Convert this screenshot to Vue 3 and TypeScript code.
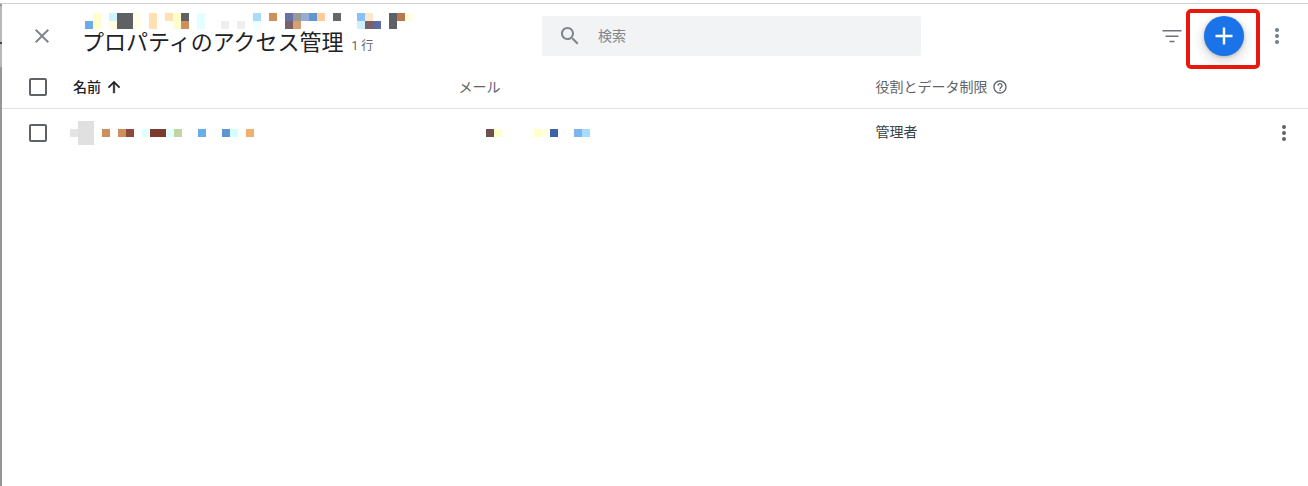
<script setup lang="ts">
type Cell = [col: number, row: number, color: string, span?: number, rows?: number]

const titleCells: Cell[] = [
  [0, 2, '#6daae8'], [1, 1, '#ffffcc', 1, 2], [3, 1, '#ccf5ff'], [3, 2, '#ffffe0'], [4, 1, '#5f6064', 2, 2],
  [6, 1, '#ffffe8', 1, 2], [8, 1, '#ffe0b0', 1, 2], [10, 1, '#ffe0b0'], [11, 1, '#ffffcc', 1, 2],
  [12, 1, '#5f6064'], [12, 2, '#cd8f5c'], [14, 1, '#e0ffff', 1, 2], [17, 2, '#eeeeee'], [19, 2, '#eeeeee'],
  [21, 1, '#a8dcff'], [21, 2, '#f0ffff'], [23, 1, '#cd8f5c'], [25, 1, '#6870a8'], [25, 2, '#7a6068'],
  [26, 1, '#999999'], [26, 2, '#d8a070'], [27, 1, '#94acd4'], [28, 1, '#6095d4'], [29, 1, '#ffcc99'],
  [31, 1, '#666666'], [34, 1, '#88c0f8'], [34, 2, '#ccf0ff'], [35, 1, '#ffe8c8'], [35, 2, '#7a6068'],
  [36, 2, '#5c6aa0'], [38, 1, '#5f6064', 1, 2], [39, 1, '#b87850'], [40, 1, '#ffffe0'],
]
const nameCells: Cell[] = [
  [0, 2, '#e4e4e4'], [1, 1, '#e0e0e0', 2, 3], [4, 2, '#cd8f5c'], [6, 2, '#cd8f5c'], [7, 2, '#8a4a3c'],
  [9, 2, '#e0ffff'], [10, 2, '#7c3a2c', 2], [12, 2, '#e0ffff'], [13, 2, '#c0d4a4'], [16, 2, '#6aacec'],
  [19, 2, '#6095d4'], [20, 2, '#d4ffff'], [22, 2, '#f0b070'],
]
const mailCells: Cell[] = [
  [0, 1, '#6e5050'], [1, 1, '#ffffcc'], [6, 1, '#ffffcc'], [7, 1, '#ffffe0'], [8, 1, '#4060a8'],
  [11, 1, '#80b4f0'], [12, 1, '#a8dcff'],
]

function cellStyle(c: Cell) {
  return {
    gridColumn: `${c[0] + 1} / span ${c[3] ?? 1}`,
    gridRow: `${c[1]} / span ${c[4] ?? 1}`,
    background: c[2],
  }
}
</script>

<template>
  <div class="page">
    <header class="top">
      <button class="icon close" aria-label="閉じる">
        <svg width="24" height="24" viewBox="0 0 24 24"><path d="M19 6.41L17.59 5 12 10.59 6.41 5 5 6.41 10.59 12 5 17.59 6.41 19 12 13.41 17.59 19 19 17.59 13.41 12z" /></svg>
      </button>
      <div class="heading">
        <div class="mosaic title-mosaic">
          <i v-for="(c, i) in titleCells" :key="i" :style="cellStyle(c)"></i>
        </div>
        <h1>プロパティのアクセス管理<small>1 行</small></h1>
      </div>
      <div class="search">
        <svg width="24" height="24" viewBox="0 0 24 24"><path d="M15.5 14h-.79l-.28-.27C15.41 12.59 16 11.11 16 9.5 16 5.91 13.09 3 9.5 3S3 5.91 3 9.5 5.91 16 9.5 16c1.61 0 3.09-.59 4.23-1.57l.27.28v.79l5 4.99L20.49 19l-4.99-5zm-6 0C7.01 14 5 11.99 5 9.5S7.01 5 9.5 5 14 7.01 14 9.5 11.99 14 9.5 14z" /></svg>
        <span>検索</span>
      </div>
      <button class="icon filter" aria-label="フィルタ">
        <svg width="24" height="24" viewBox="0 0 24 24"><path d="M2.5 6.7h19M5.5 12.2h13M9.5 17.5h5" /></svg>
      </button>
      <div class="fab-wrap">
        <button class="fab" aria-label="追加">
          <svg width="24" height="24" viewBox="0 0 24 24"><path d="M3.5 12h17M12 3.5v17" /></svg>
        </button>
        <span class="callout"></span>
      </div>
      <button class="icon kebab top-kebab" aria-label="その他"><b></b><b></b><b></b></button>
    </header>

    <div class="grid head">
      <span class="check"></span>
      <span class="sort"><span class="lift">名前</span>
        <svg width="18" height="18" viewBox="0 0 24 24"><path d="M4 12l1.41 1.41L11 7.83V20h2V7.83l5.58 5.59L20 12l-8-8-8 8z" /></svg>
      </span>
      <span class="lift">メール</span>
      <span class="role"><span class="lift">役割とデータ制限</span>
        <svg width="16" height="16" viewBox="0 0 24 24"><path d="M11 18h2v-2h-2v2zm1-16C6.48 2 2 6.48 2 12s4.48 10 10 10 10-4.48 10-10S17.52 2 12 2zm0 18c-4.41 0-8-3.59-8-8s3.59-8 8-8 8 3.59 8 8-3.59 8-8 8zm0-14c-2.21 0-4 1.79-4 4h2c0-1.1.9-2 2-2s2 .9 2 2c0 2-3 1.75-3 5h2c0-2.25 3-2.5 3-5 0-2.21-1.79-4-4-4z" /></svg>
      </span>
    </div>

    <div class="grid row">
      <span class="check"></span>
      <div class="mosaic name-mosaic">
        <i v-for="(c, i) in nameCells" :key="i" :style="cellStyle(c)"></i>
      </div>
      <div class="mosaic mail-mosaic">
        <i v-for="(c, i) in mailCells" :key="i" :style="cellStyle(c)"></i>
      </div>
      <span class="admin">管理者</span>
      <button class="icon kebab" aria-label="その他"><b></b><b></b><b></b></button>
    </div>
  </div>
</template>

<style>
html, body { margin: 0; background: #fff; }
</style>

<style scoped>
.page {
  box-sizing: border-box;
  width: 1308px;
  height: 483px;
  margin-top: 3px;
  border-top: 1px solid #cfcfcf;
  padding-left: 2px;
  background: linear-gradient(#969696 0 2px, #b8b8b8 2px 38px, #444 38px 40px, #b8b8b8 40px 63px, #969696 63px) 0 0 / 2px 100% no-repeat #fff;
  font-family: Roboto, "Noto Sans CJK JP", sans-serif;
  color: #5f6368;
  overflow: hidden;
}
button { border: 0; padding: 0; background: none; display: flex; align-items: center; justify-content: center; }
.top {
  display: flex;
  align-items: flex-start;
  height: 62px;
  box-sizing: border-box;
  padding: 12px 0 0 28px;
}
.icon { width: 24px; height: 24px; }
.close { margin-top: 8px; }
.close svg { fill: #80868b; }
.heading { width: 459px; margin-left: 29px; margin-top: -3px; flex: none; }
.mosaic { display: grid; grid-auto-columns: 8px; grid-auto-rows: 8px; }
.title-mosaic { margin-left: 2px; height: 16px; }
h1 {
  margin: -1px 0 0 -1px;
  font-size: 22px;
  line-height: 30px;
  font-weight: 400;
  color: #202124;
  white-space: nowrap;
}
h1 small { font-size: 12px; margin-left: 8px; color: #5f6368; font-weight: 400; }
.search {
  box-sizing: border-box;
  width: 379px;
  height: 40px;
  flex: none;
  display: flex;
  align-items: center;
  gap: 16px;
  padding-left: 16px;
  background: #f1f3f4;
  border-radius: 2px;
  font-size: 14px;
  color: #80868b;
}
.search span { margin-top: -2px; }
.search svg { fill: #80868b; }
.filter { margin: 8px 0 0 239px; }
.filter svg { fill: none; stroke: #6f7378; stroke-width: 1.5; }
.fab-wrap { position: relative; margin-left: 20px; width: 40px; height: 40px; }
.fab {
  width: 40px;
  height: 40px;
  border-radius: 50%;
  background: #1a73e8;
  box-shadow: 0 1px 3px rgba(60, 64, 67, .3), 0 4px 8px 3px rgba(60, 64, 67, .15);
}
.fab svg { fill: none; stroke: #fff; stroke-width: 2.4; }
.callout {
  position: absolute;
  left: -18px;
  right: -16px;
  top: -7px;
  bottom: -13px;
  border: 4px solid #e8180c;
  border-radius: 5px;
  pointer-events: none;
}
.kebab { flex-direction: column; gap: 2px; }
.kebab b { width: 4px; height: 4px; border-radius: 50%; background: #5f6368; }
.top-kebab { margin: 8px 0 0 21px; }
.top-kebab b { background: #6c7f8e; }
.grid {
  display: grid;
  grid-template-columns: 71px 385.5px 417px 1fr 36px;
  align-items: center;
  font-size: 14px;
}
.check {
  box-sizing: border-box;
  width: 18px;
  height: 18px;
  margin-left: 27px;
  border: 2px solid #5f6368;
  border-radius: 2px;
}
.head {
  height: 43px;
  border-bottom: 1px solid #e0e0e0;
  box-sizing: border-box;
  grid-template-columns: 71px 385.5px 417px 1fr;
}
.lift { margin-top: -2px; }
.sort { display: flex; align-items: center; gap: 4px; color: #202124; font-weight: 500; }
.sort svg { fill: #202124; stroke: #202124; stroke-width: .6; }
.role { display: flex; align-items: center; gap: 4px; }
.role svg { fill: #5f6368; }
.row { height: 48px; color: #3c4043; }
.name-mosaic { margin-left: -3px; }
.mail-mosaic { margin-left: 27.5px; }
.admin { margin-top: -4px; }
.row .kebab { justify-self: start; }
.name-mosaic, .mail-mosaic { align-content: center; }
</style>
